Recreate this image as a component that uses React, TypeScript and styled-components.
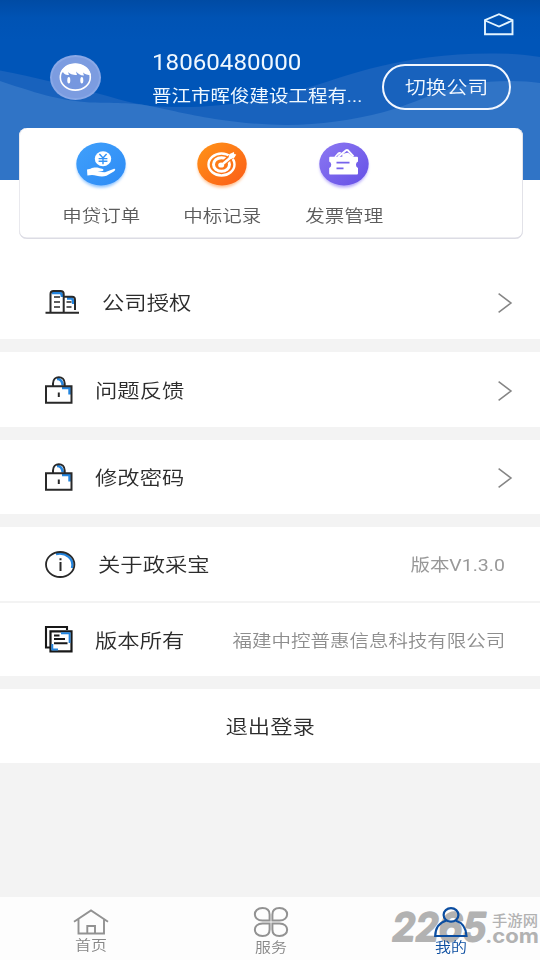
import React from 'react';
import styled, { createGlobalStyle } from 'styled-components';

const GlobalStyle = createGlobalStyle`
  * { box-sizing: border-box; }
  body { margin: 0; background: #f3f3f3; }
  svg { display: block; overflow: visible; flex: none; }
`;

const Screen = styled.main`
  position: relative;
  width: 540px;
  height: 960px;
  display: flex;
  flex-direction: column;
  overflow: hidden;
  background: #f3f3f3;
  font-family: Roboto, 'Noto Sans CJK SC', sans-serif;
`;

const Label = styled.span<{ $size: number; $color: string; $origin?: string; $weight?: number }>`
  display: inline-block;
  white-space: nowrap;
  font-weight: ${(p) => p.$weight ?? 350};
  font-size: ${(p) => p.$size}px;
  line-height: 24px;
  color: ${(p) => p.$color};
  transform: scaleX(1.14);
  transform-origin: ${(p) => p.$origin ?? 'left'} center;
`;

const Top = styled.section`
  height: 264px;
  flex: none;
  background: #fff;
`;

const Header = styled.header`
  position: relative;
  height: 180px;
  background: linear-gradient(#004ba4 0, #0053b4 18px, #0055b8 40px);
`;

const Waves = styled.svg`
  position: absolute;
  inset: 0;
`;

const HeaderBody = styled.div`
  position: relative;
  height: 128px;
  display: grid;
  grid-template-columns: 152px 230px 129px;
  grid-template-rows: 51px 77px;
`;

const MailSlot = styled.div`
  grid-column: 3;
  padding: 13px 0 0 102px;
`;

const AvatarSlot = styled.div`
  grid-row: 2;
  padding: 4px 0 0 50px;
`;

const UserText = styled.div`
  grid-row: 2;
  display: flex;
  flex-direction: column;
  align-items: flex-start;
  gap: 9px;
`;

const SwitchButton = styled.button`
  grid-row: 2;
  height: 46px;
  margin-top: 13px;
  padding: 2px 0 0;
  display: flex;
  align-items: center;
  justify-content: center;
  border: 2px solid #f2f7ff;
  border-radius: 23px;
  background: transparent;
  font-family: inherit;
`;

const Card = styled.div`
  position: relative;
  width: 504px;
  height: 111px;
  margin-left: 19px;
  padding-left: 21px;
  display: flex;
  background: #fff;
  border-radius: 8px;
  box-shadow: inset 0 -1.5px 0 #dcdce4, inset 1px 0 0 #e9e9ee, inset -1px 0 0 #e2e2e8;
`;

const Shortcut = styled.div`
  width: 121.6px;
  display: flex;
  flex-direction: column;
  align-items: center;
  padding-top: 14px;
  gap: 18px;
`;

const Group = styled.section<{ $last?: boolean }>`
  flex: none;
  margin-bottom: ${(p) => (p.$last ? 0 : 13)}px;
  background: #fff;
`;

const Row = styled.div<{ $height?: number; $line?: boolean }>`
  height: ${(p) => p.$height ?? 74}px;
  padding: 0 35px 0 45px;
  display: flex;
  align-items: center;
  ${(p) => p.$line && 'border-bottom: 2px solid #f3f3f3;'}
`;

const RowText = styled.div`
  padding-top: 4px;
`;

const LogoutRow = styled.div`
  height: 74px;
  padding-top: 4px;
  display: flex;
  align-items: center;
  justify-content: center;
`;

const IconSlot = styled.div<{ $width: number }>`
  width: ${(p) => p.$width}px;
  flex: none;
`;

const Trailing = styled.div<{ $end?: number }>`
  margin-left: auto;
  padding-top: 2px;
  margin-right: ${(p) => p.$end ?? 0}px;
`;

const Nav = styled.nav`
  margin-top: auto;
  height: 63px;
  flex: none;
  display: grid;
  grid-template-columns: repeat(3, 180px);
  padding-left: 1px;
  background: #fdfdfd;
`;

const Tab = styled.div<{ $top: number }>`
  position: relative;
  z-index: 2;
  display: flex;
  flex-direction: column;
  align-items: center;
  gap: 0;
  padding-top: ${(p) => p.$top}px;
`;

const TabText = styled.div`
  height: 20px;
  margin-top: -2px;
`;

const Watermark = styled.svg`
  position: absolute;
  left: 380px;
  top: 900px;
  z-index: 1;
`;

const HeaderWaves = () => (
  <Waves width="540" height="180" viewBox="0 0 540 180">
    <path d="M0 70.5C34 77 70 86 100 94C118 99 130 103 150 106C210 110 260 102 310 87C350 75 400 54 490 53.5Q520 53 540 57V180H0Z" fill="#1862bd" />
    <path d="M0 81C45 96 60 100 90 102.5C120 103 135 103 150 106C170 110 185 114 215 119C280 129 330 126 384 112C430 99 450 81 510 81Q528 81 540 83V180H0Z" fill="#3074c6" />
  </Waves>
);

const MailIcon = () => (
  <svg width="30" height="23" viewBox="0 0 30 23" fill="none" stroke="#e3f4ff" strokeWidth="1.9">
    <path d="M1 7.2V21.2H28.5V7.2L15 1.2Z" />
    <path d="M1 7.5L15 13.5L28.5 7.5" />
  </svg>
);

const Avatar = () => (
  <svg width="51" height="45" viewBox="0 0 51 45">
    <ellipse cx="25.5" cy="22.5" rx="25.5" ry="22.5" fill="#8aa8e6" />
    <ellipse cx="25.5" cy="22.5" rx="23.5" ry="20.5" fill="#7c9ce0" />
    <ellipse cx="25.3" cy="22.3" rx="15" ry="12.8" fill="#7697df" stroke="#fff" strokeWidth="1.6" />
    <path d="M10 19.5C13 4.5 38 4.5 41 20C38 20 35 19.5 33 17.5L34 20.5C30 20.5 28 18.5 26 16.5L27 20C22 20 20 19 18 17L19 20C15 20 13.5 18.5 13 17Z" fill="#fff" />
    <ellipse cx="18.8" cy="25.3" rx="1.5" ry="3.2" fill="#fff" />
    <ellipse cx="31.8" cy="25.3" rx="1.5" ry="3.2" fill="#fff" />
  </svg>
);

type Kind = 'loan' | 'bid' | 'invoice';
const discs: Record<Kind, [string, string, string]> = {
  loan: ['#40a0fb', '#2d8bf5', '#8dc3ff'],
  bid: ['#ff9418', '#fb5c18', '#ffc08f'],
  invoice: ['#8c78f2', '#6550e6', '#b5a8fa'],
};

const discArt: Record<Kind, React.ReactNode> = {
  loan: (
    <>
      <ellipse cx="27" cy="16.7" rx="8.2" ry="7.5" fill="#fff" />
      <path d="M23.4 12L27 16L30.6 12M27 16V22.3M22.6 16.6H31.4M22.6 19.3H31.4" stroke="#3293f7" strokeWidth="1.4" fill="none" />
      <path d="M11 27.5L14.5 26.7C19 24.7 22 25.7 25 26.5C28 26.9 28.4 28.8 25.5 29.3L21.5 29.8L29 30.2L37.5 27C39.5 26.3 40 28.1 37.8 29.5L30.5 33.7C25 35.7 20 33.2 16 33L11.4 33.4Z" fill="#fff" />
    </>
  ),
  bid: (
    <>
      <g fill="none" stroke="#fff">
        <ellipse cx="24.5" cy="22.5" rx="13" ry="11" strokeWidth="2.4" />
        <ellipse cx="24.5" cy="22.5" rx="8" ry="6.8" strokeWidth="3" />
      </g>
      <ellipse cx="24.2" cy="23" rx="3" ry="2.6" fill="#fff" />
      <path d="M26 21.5L38 11.5" stroke="#fb761a" strokeWidth="5.5" />
      <path d="M24 23.5L36 13.6" stroke="#fff" strokeWidth="2.6" />
      <path d="M31.5 15.5L32.5 12L37 10L37.2 12L39.3 12.4L37.3 15.7L33.8 17Z" fill="#fff" />
    </>
  ),
  invoice: (
    <>
      <path d="M19 15L27 8.3Q28 7.6 29 8.4L34.5 14.5" fill="none" stroke="#fff" strokeWidth="2" />
      <path d="M16 15L19.5 11Q20.5 10.2 22 11M24 12.5L29 11.5L33 15H24Z" fill="#fff" stroke="#fff" strokeWidth="1.4" />
      <path d="M24 14.5L27 11.2L30.5 14.5Z" fill="#fff" />
      <path d="M11 14.8H38Q39 14.8 39 16V19.5A3.6 3.6 0 0 0 39 26V31.3Q39 32.5 38 32.5H11Q10.2 32.5 10.2 31.3V26A3.6 3.6 0 0 0 10.2 19.5V16Q10.2 14.8 11 14.8Z" fill="#fff" />
      <path d="M17.5 20.7H30.5M17.5 26.3H24.5" stroke="#7663ec" strokeWidth="1.8" />
    </>
  ),
};

const Disc = ({ kind }: { kind: Kind }) => (
  <svg width="50" height="44" viewBox="0 0 50 44">
    <defs>
      <linearGradient id={kind} x1="0" y1="0" x2="1" y2="1">
        <stop stopColor={discs[kind][0]} />
        <stop offset="1" stopColor={discs[kind][1]} />
      </linearGradient>
      <filter id={`${kind}-glow`} x="-20%" y="-20%" width="140%" height="150%">
        <feGaussianBlur stdDeviation="1.8" />
      </filter>
    </defs>
    <ellipse cx="25" cy="24.5" rx="24" ry="21" fill={discs[kind][2]} filter={`url(#${kind}-glow)`} />
    <ellipse cx="25" cy="22" rx="24.7" ry="21.5" fill={`url(#${kind})`} />
    {discArt[kind]}
  </svg>
);

const BuildingIcon = () => (
  <svg width="34" height="24" viewBox="0 0 34 24" fill="none">
    <path d="M7 2.9H15.2Q17 3.2 17 7M22 8.4H26.5Q28.2 8.8 28.2 14" stroke="#2385df" strokeWidth="2.6" />
    <g stroke="#292929" strokeWidth="2">
      <path d="M0.5 22.8H34M5.5 22V4Q5.5 1 8.5 1H15.5Q18.7 1 18.7 4V22M19 6.8H27Q30 6.8 30 10V20" />
      <path d="M9 7H15M9 12H15M9 17H15M21.5 12H26.5M21.5 17H26.5" strokeWidth="1.6" />
    </g>
  </svg>
);

const LockIcon = () => (
  <svg width="28" height="28" viewBox="0 0 28 28" fill="none">
    <path d="M12 3Q17 2.8 17.8 9.5M17 12H24.6V18.5" stroke="#2385df" strokeWidth="2.6" />
    <path d="M1 10.3H26.5V26.7H1ZM8 10V7.5C8 -1 19.7 -1 19.7 7.5V10" stroke="#292929" strokeWidth="2" />
    <path d="M13.8 16.5V21" stroke="#292929" strokeWidth="2" />
  </svg>
);

const InfoIcon = () => (
  <svg width="31" height="27" viewBox="0 0 31 27" fill="none">
    <path d="M11 3C21 .8 29.5 8 27 17" stroke="#2385df" strokeWidth="2.4" />
    <ellipse cx="15.2" cy="13.5" rx="14.2" ry="12.5" stroke="#292929" strokeWidth="1.8" />
    <path d="M15.5 11V20M15.5 7.2V9.2" stroke="#292929" strokeWidth="2" />
  </svg>
);

const DocsIcon = () => (
  <svg width="28" height="27" viewBox="0 0 28 27" fill="none">
    <path d="M5 21.5H1V1H22V4" stroke="#181818" strokeWidth="2.1" />
    <path d="M5.5 5.3H26.5V25.4H5.5Z" stroke="#181818" strokeWidth="2.2" />
    <path d="M16 7.3H24.6V17M7.3 18V23.5H13" stroke="#2385df" strokeWidth="1.9" />
    <path d="M9 9.5H14.5M9 13H20M9 17.3H22.5" stroke="#181818" strokeWidth="1.9" />
  </svg>
);

const Chevron = () => (
  <svg width="14" height="20" viewBox="0 0 14 20" fill="none" stroke="#858585" strokeWidth="1.5">
    <path d="M.6 .6L13 10L.6 19.4" />
  </svg>
);

const HomeIcon = () => (
  <svg width="36" height="26" viewBox="0 0 36 26" fill="none" stroke="#929292" strokeWidth="1.9">
    <path d="M1 12.8L18 1.5L35 12.8M5.5 10V24.5H31V10M14.3 24V17H22V24" />
  </svg>
);

const CloverIcon = () => (
  <svg width="34" height="30" viewBox="0 0 34 30" fill="none" stroke="#929292" strokeWidth="2">
    <path d="M15.6 13.6H8.5C-1.7 13.6-1.7 1 8.5 1C13 1 15.6 3.5 15.6 7.5Z" />
    <path d="M18.4 13.6H25.5C35.7 13.6 35.7 1 25.5 1C21 1 18.4 3.5 18.4 7.5Z" />
    <path d="M15.6 16.4H8.5C-1.7 16.4-1.7 29 8.5 29C13 29 15.6 26.5 15.6 22.5Z" />
    <path d="M18.4 16.4H25.5C35.7 16.4 35.7 29 25.5 29C21 29 18.4 26.5 18.4 22.5Z" />
  </svg>
);

const PersonIcon = () => (
  <svg width="34" height="30" viewBox="0 0 34 30" fill="none" stroke="#0b4da0" strokeWidth="2.2">
    <ellipse cx="17" cy="7.9" rx="7.4" ry="6.8" />
    <path d="M12.5 13.5C5.5 15.5 1.5 20 1.2 29H32.5C32 20 28 15.5 21.5 13.5" />
  </svg>
);

const shortcuts: { kind: Kind; text: string }[] = [
  { kind: 'loan', text: '申贷订单' },
  { kind: 'bid', text: '中标记录' },
  { kind: 'invoice', text: '发票管理' },
];

const links = [
  { text: '公司授权', icon: <BuildingIcon />, slot: 57, height: 75 },
  { text: '问题反馈', icon: <LockIcon />, slot: 50, height: 75 },
  { text: '修改密码', icon: <LockIcon />, slot: 50, height: 74 },
];

export default function App() {
  return (
    <Screen>
      <GlobalStyle />
      <Top>
        <Header>
          <HeaderWaves />
          <HeaderBody>
            <MailSlot><MailIcon /></MailSlot>
            <AvatarSlot><Avatar /></AvatarSlot>
            <UserText>
              <Label $size={21.2} $weight={400} $color="#eff8ff">18060480000</Label>
              <Label $size={17.1} $weight={400} $color="#eff8ff">晋江市晖俊建设工程有...</Label>
            </UserText>
            <SwitchButton>
              <Label $size={18.3} $color="#f4f9ff" $origin="center">切换公司</Label>
            </SwitchButton>
          </HeaderBody>
          <Card>
            {shortcuts.map((s) => (
              <Shortcut key={s.kind}>
                <Disc kind={s.kind} />
                <Label $size={17.1} $color="#5c5c5c" $origin="center">{s.text}</Label>
              </Shortcut>
            ))}
          </Card>
        </Header>
      </Top>
      {links.map((l) => (
        <Group key={l.text}>
          <Row $height={l.height}>
            <IconSlot $width={l.slot}>{l.icon}</IconSlot>
            <RowText><Label $size={19.6} $color="#2c2c2c">{l.text}</Label></RowText>
            <Trailing $end={-7}><Chevron /></Trailing>
          </Row>
        </Group>
      ))}
      <Group>
        <Row $height={76} $line>
          <IconSlot $width={53}><InfoIcon /></IconSlot>
          <RowText><Label $size={19.6} $color="#2c2c2c">关于政采宝</Label></RowText>
          <Trailing>
            <Label $size={17.1} $weight={400} $color="#989898" $origin="right">版本V1.3.0</Label>
          </Trailing>
        </Row>
        <Row $height={73}>
          <IconSlot $width={50}><DocsIcon /></IconSlot>
          <RowText><Label $size={19.6} $color="#2c2c2c">版本所有</Label></RowText>
          <Trailing>
            <Label $size={17.1} $color="#8e8e8e" $origin="right">福建中控普惠信息科技有限公司</Label>
          </Trailing>
        </Row>
      </Group>
      <Group $last>
        <LogoutRow>
          <Label $size={19.6} $color="#2c2c2c" $origin="center">退出登录</Label>
        </LogoutRow>
      </Group>
      <Nav>
        <Tab $top={12}>
          <HomeIcon />
          <TabText><Label $size={14} $color="#868686" $origin="center">首页</Label></TabText>
        </Tab>
        <Tab $top={10}>
          <CloverIcon />
          <TabText><Label $size={14} $color="#868686" $origin="center">服务</Label></TabText>
        </Tab>
        <Tab $top={10}>
          <PersonIcon />
          <TabText><Label $size={14} $color="#0b4da0" $origin="center">我的</Label></TabText>
        </Tab>
      </Nav>
      <Watermark width="160" height="60" viewBox="0 0 160 60" fill="#b2b2b2">
        <text x="17" y="41.5" transform="skewX(-9)" textLength="94" lengthAdjust="spacingAndGlyphs" fontFamily="Inter" fontSize="39" fontWeight="600" stroke="#b2b2b2" strokeWidth="2.2" strokeLinejoin="round">2265</text>
        <text x="112" y="26" textLength="46" lengthAdjust="spacingAndGlyphs" fontFamily="Noto Sans CJK SC" fontSize="14.5" fontWeight="500">手游网</text>
        <text x="105" y="42.5" textLength="54" lengthAdjust="spacingAndGlyphs" fontFamily="Inter" fontSize="20" fontWeight="700">.com</text>
      </Watermark>
    </Screen>
  );
}
